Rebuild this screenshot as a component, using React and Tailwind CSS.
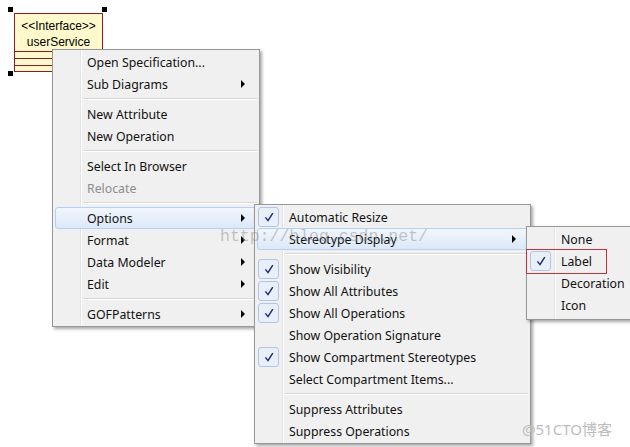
const font = { fontFamily: '"Noto Sans", "Open Sans", sans-serif' };

const mainItems = [
  { label: "Open Specification...", },
  { label: "Sub Diagrams", arrow: true },
  { sep: true },
  { label: "New Attribute" },
  { label: "New Operation" },
  { sep: true },
  { label: "Select In Browser" },
  { label: "Relocate", disabled: true },
  { sep: true },
  { label: "Options", arrow: true, active: true },
  { label: "Format", arrow: true },
  { label: "Data Modeler", arrow: true },
  { label: "Edit", arrow: true },
  { sep: true },
  { label: "GOFPatterns", arrow: true },
];

const optionItems = [
  { label: "Automatic Resize", check: true },
  { label: "Stereotype Display", arrow: true, active: true },
  { sep: true },
  { label: "Show Visibility", check: true },
  { label: "Show All Attributes", check: true },
  { label: "Show All Operations", check: true },
  { label: "Show Operation Signature" },
  { label: "Show Compartment Stereotypes", check: true },
  { label: "Select Compartment Items..." },
  { sep: true },
  { label: "Suppress Attributes" },
  { label: "Suppress Operations" },
];

const displayItems = [
  { label: "None" },
  { label: "Label", check: true },
  { label: "Decoration" },
  { label: "Icon" },
];

function Tick() {
  return (
    <svg width="10" height="10" viewBox="0 0 10 10">
      <path d="M1.4 5.4 L4 8.6 L8.8 1.2" fill="none" stroke="#1c2a78" strokeWidth="1.5" />
    </svg>
  );
}

function MenuRow({ item }) {
  if (item.sep) {
    return (
      <div className="h-[8px] flex items-center">
        <div className="ml-[30px] mr-[2px] flex-1 border-t border-t-[#d7d7d7] border-b border-b-white" />
      </div>
    );
  }
  return (
    <div
      className={
        "mx-[2px] h-[22px] flex items-center rounded-[3px] border " +
        (item.active
          ? "border-[#b4d0f2] bg-[linear-gradient(to_bottom,#f1f6fd,#dce8f8)]"
          : "border-transparent")
      }
    >
      <div className="w-[31px] h-full flex items-center">
        {item.check && (
          <div className="w-[21px] h-[20px] rounded-[3px] border border-[#aec6e6] bg-[#e8eff9] flex items-center justify-center">
            <Tick />
          </div>
        )}
      </div>
      <span
        className={
          "flex-1 pt-[2px] text-[12.3px] leading-none whitespace-nowrap " +
          (item.disabled ? "text-[#8d8d8d]" : "text-[#111]")
        }
      >
        {item.label}
      </span>
      {item.arrow && (
        <span className="mr-[11px] w-0 h-0 border-y-[4px] border-y-transparent border-l-[4px] border-l-black" />
      )}
    </div>
  );
}

function Menu({ items, className }) {
  return (
    <div
      style={font}
      className={
        "absolute border border-[#979797] bg-[#f0f0f0] py-[1px] shadow-[2px_2px_3px_rgba(0,0,0,0.35)] bg-[linear-gradient(to_right,transparent_27px,#e2e3e3_27px,#e2e3e3_28px,#ffffff_28px,#ffffff_29px,transparent_29px)] " +
        className
      }
    >
      {items.map((item, i) => (
        <MenuRow key={i} item={item} />
      ))}
    </div>
  );
}

function ClassNode() {
  return (
    <div className="absolute left-[8px] top-[7px]">
      <div
        className="ml-[6px] mt-[6px] w-[89px] border border-[#8a1c2c] bg-[#fff9cc] flex flex-col"
        style={{ fontFamily: '"Liberation Sans", Arial, sans-serif' }}
      >
        <div className="h-[37px] pt-[2px] flex flex-col items-center justify-center text-[12px] leading-[16px] text-black">
          <span>&lt;&lt;Interface&gt;&gt;</span>
          <span>userService</span>
        </div>
        <div className="h-[7px] border-t border-[#8a1c2c]" />
        <div className="h-[7px] border-t border-[#8a1c2c]" />
        <div className="h-[6px] border-t border-[#8a1c2c]" />
      </div>
      <span className="absolute left-0 top-0 w-[5px] h-[5px] bg-black" />
      <span className="absolute left-[94px] top-0 w-[5px] h-[5px] bg-black" />
      <span className="absolute left-0 top-[64px] w-[5px] h-[5px] bg-black" />
      <span className="absolute left-[94px] top-[64px] w-[5px] h-[5px] bg-black" />
    </div>
  );
}

export default function App() {
  return (
    <div className="relative w-[630px] h-[447px] bg-white overflow-hidden">
      <ClassNode />
      <Menu items={mainItems} className="left-[52px] top-[49px] w-[208px]" />
      <Menu items={optionItems} className="left-[254px] top-[204px] w-[277px]" />
      <Menu items={displayItems} className="left-[526px] top-[226px] w-[120px] pb-[3px]" />
      <div className="absolute left-[526px] top-[249px] w-[81px] h-[25px] border border-[#c0343a]" />
      <div
        className="absolute left-[220px] top-[229px] text-[16.5px] leading-none text-[rgba(130,130,130,0.45)] pointer-events-none"
        style={{ fontFamily: '"Liberation Mono", "Courier New", monospace' }}
      >
        http://blog.csdn.net/
      </div>
      <div
        className="absolute left-[522px] top-[419px] text-[15px] leading-[20px] text-[#bdbdbd]"
        style={{ fontFamily: '"Noto Sans", "Noto Sans CJK SC", sans-serif' }}
      >
        @51CTO博客
      </div>
    </div>
  );
}
